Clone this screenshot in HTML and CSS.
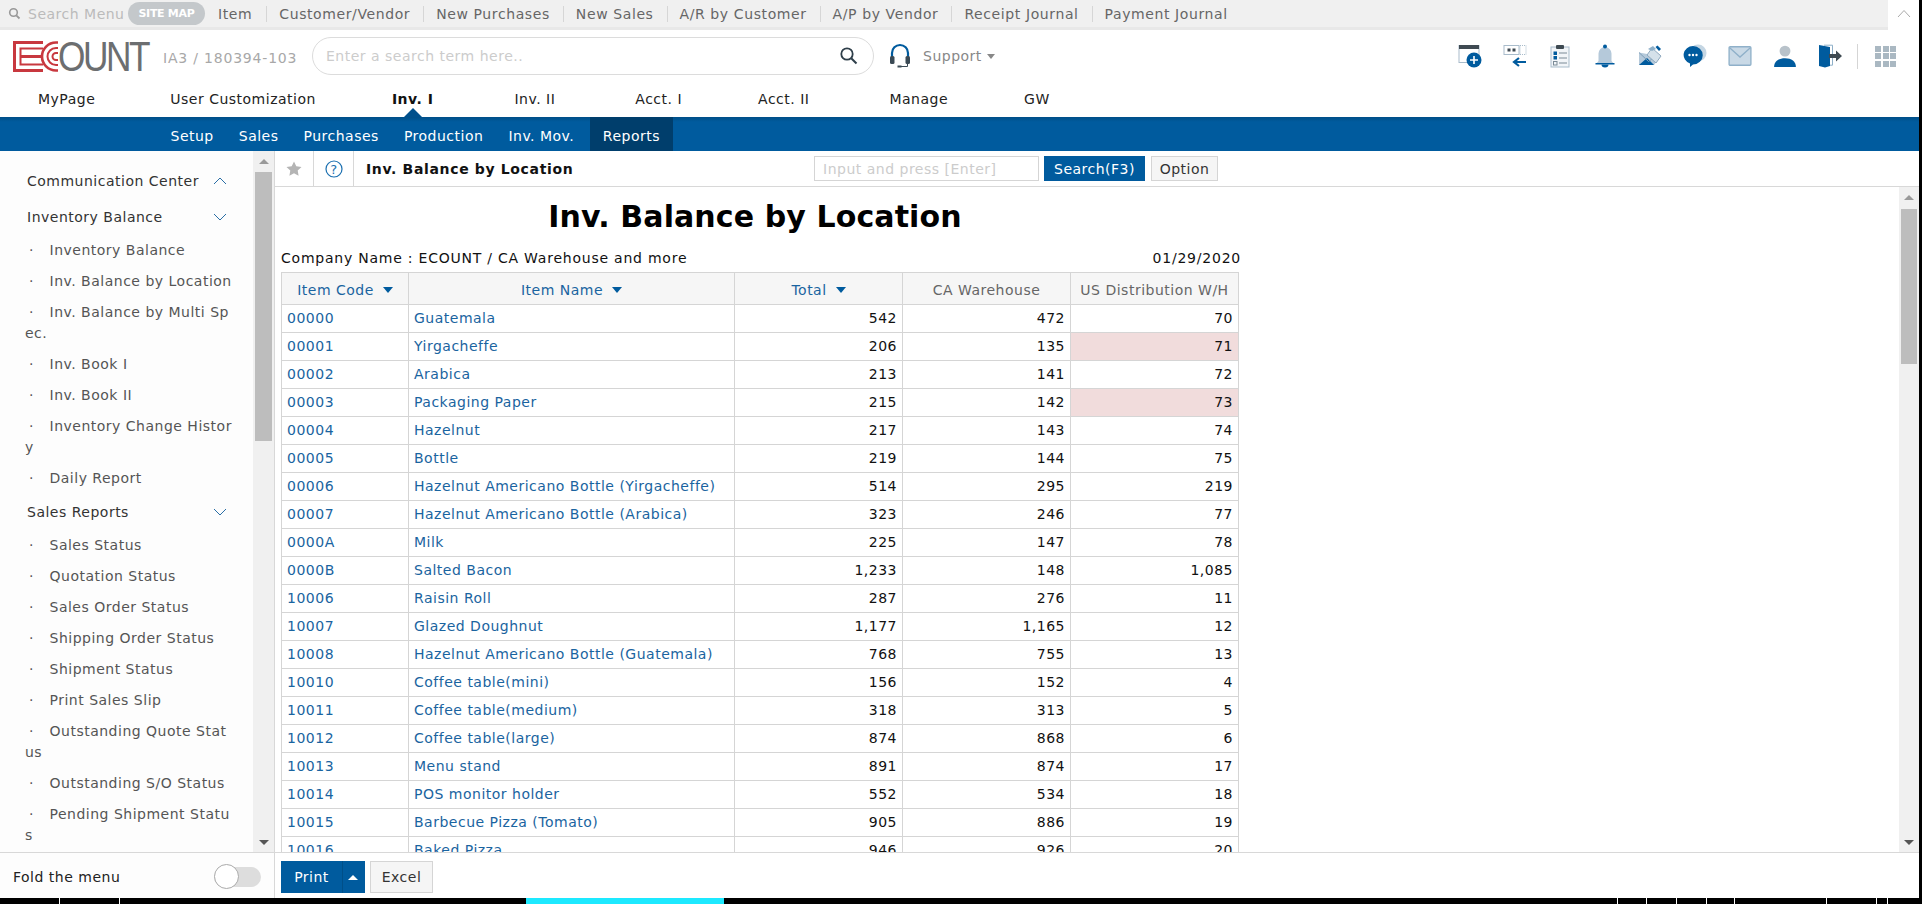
FILE: index.html
```html
<!DOCTYPE html>
<html lang="en">
<head>
<meta charset="utf-8">
<title>Inv. Balance by Location</title>
<link rel="stylesheet" href="styles.css">
</head>
<body>
<div class="frame">
<div class="page">
  <div class="quick">
    <div class="quick-bar">
      <svg class="q-search" width="13" height="13" viewBox="0 0 13 13"><circle cx="5.500" cy="5.500" r="3.800" fill="none" stroke="#999" stroke-width="1.600"/><path d="M8.300 8.300l3.200 3.200" stroke="#999" stroke-width="1.800"/></svg>
      <span class="q-label">Search Menu</span>
      <span class="sitemap">SITE MAP</span>
      <a class="q-link first">Item</a><a class="q-link">Customer/Vendor</a><a class="q-link">New Purchases</a><a class="q-link">New Sales</a><a class="q-link">A/R by Customer</a><a class="q-link">A/P by Vendor</a><a class="q-link">Receipt Journal</a><a class="q-link">Payment Journal</a>
    </div>
    <div class="q-fold"><svg width="14" height="9" viewBox="0 0 14 9"><path d="M1 8l6-6.500L13 8" fill="none" stroke="#aaa" stroke-width="1"/></svg></div>
  </div>

  <header class="head">
    <div class="logo" aria-label="ECOUNT">
      <svg width="45" height="31" viewBox="0 0 45 31" class="logo-e"><g fill="none" stroke="#c8383f"><path d="M30 1.500H1.500v28H30" stroke-width="3"/><path d="M30 7.500H7.500v16H30" stroke-width="2"/><path d="M7.500 15.500H28" stroke-width="3"/><path d="M45 1.500h-2a14 14 0 0 0 0 28h2" stroke-width="2.600"/><path d="M45 7h-2a8.500 8.500 0 0 0 0 17h2" stroke-width="2"/><path d="M45 12h-2a3.500 3.500 0 0 0 0 7h2" stroke-width="2"/></g></svg>
      <span class="logo-text">OUNT</span>
    </div>
    <span class="company">IA3 / 180394-103</span>
    <div class="search">
      <span class="search-ph">Enter a search term here..</span>
      <svg width="20" height="20" viewBox="0 0 20 20"><circle cx="8" cy="8" r="5.700" fill="none" stroke="#2f3f4a" stroke-width="1.800"/><path d="M12.200 12.200l5.300 5.300" stroke="#2f3f4a" stroke-width="2"/></svg>
    </div>
    <svg class="headset" width="22" height="26" viewBox="0 0 22 26"><path d="M3 14V10a8 8 0 0 1 16 0v4" fill="none" stroke="#005b9e" stroke-width="2.200"/><rect x="1" y="13" width="4.500" height="8" rx="1.500" fill="#3b4a55"/><rect x="16.500" y="13" width="4.500" height="8" rx="1.500" fill="#3b4a55"/><path d="M18.500 21v2.500H12" fill="none" stroke="#3b4a55" stroke-width="1"/><rect x="8.500" y="22.500" width="4" height="2" fill="#3b4a55"/></svg>
    <span class="support">Support</span><span class="support-caret"></span>
    <div class="tools">
      <svg viewBox="0 0 24 24"><rect x="1" y="1.500" width="20" height="17" fill="#fff" stroke="#a9bccb"/><rect x="1" y="1" width="20" height="4" fill="#3f4a52"/><circle cx="16" cy="16" r="7.500" fill="#005b9e"/><path d="M16 12v8M12 16h8" stroke="#fff" stroke-width="1.600"/></svg>
      <svg viewBox="0 0 24 24"><rect x="1" y="1.500" width="15" height="9" fill="#fff" stroke="#a9bccb"/><rect x="4.500" y="4.500" width="3" height="3" fill="#3f4a52"/><rect x="9.500" y="4.500" width="3" height="3" fill="#3f4a52"/><rect x="17" y="1.500" width="6" height="9" fill="none" stroke="#a9bccb" stroke-dasharray="1 1"/><path d="M23 18H12M16 14l-5 4 5 4" fill="none" stroke="#005b9e" stroke-width="2.200"/></svg>
      <svg viewBox="0 0 20 24"><rect x="1" y="3" width="18" height="20" fill="#f2f5f8" stroke="#a9bccb"/><rect x="6" y="1" width="8" height="4" rx="1" fill="#3f4a52"/><rect x="3.500" y="7.500" width="3.500" height="3.500" fill="#005b9e"/><rect x="3.500" y="12" width="3.500" height="3.500" fill="#005b9e"/><rect x="3.500" y="17.500" width="3.500" height="3.500" fill="none" stroke="#7a8a96"/><path d="M9 9h8M9 14h8M9 19h8" stroke="#7a8a96"/></svg>
      <svg viewBox="0 0 20 24"><path d="M3.500 17V9.500a6.500 6.500 0 0 1 13 0V17l2.500 3H1z" fill="#b5c9da"/><circle cx="10" cy="2.500" r="2" fill="#005b9e"/><path d="M0.500 19h19v1.500H.500z" fill="#005b9e"/><path d="M6.500 20.500h7a3.500 3 0 0 1-7 0" fill="#005b9e"/></svg>
      <svg viewBox="0 0 24 24"><path d="M1 8.500V21h15l4-6V12z" fill="#b5c9da"/><path d="M1 21l8-7 7 7z" fill="#005b9e"/><path d="M1 8.500l9.500 9L14 15" fill="none" stroke="#7f9fb8"/><path d="M14 4l9 8-5 7-9-8z" fill="#d5e1ea" stroke="#8fa9be"/><path d="M10 5l5-3 3 3-4 2z" fill="#8fb0c9"/><path d="M17.500 3l2-1.500 3.500 3.500-2 2z" fill="#005b9e"/></svg>
      <svg viewBox="0 0 24 24"><circle cx="15" cy="9" r="8.500" fill="#c5d6e3"/><path d="M10 2a9.500 9 0 0 1 0 18.500l-3 2.500v-3.500A9.500 9 0 0 1 10 2z" fill="#005b9e"/><circle cx="6.500" cy="11" r="1.200" fill="#fff"/><circle cx="10" cy="11" r="1.200" fill="#fff"/><circle cx="13.500" cy="11" r="1.200" fill="#fff"/></svg>
      <svg viewBox="0 0 22 20"><rect x="1" y="1.500" width="20" height="17" rx="1" fill="#c9d9e6" stroke="#8fb0c9" stroke-width="1.200"/><path d="M1.500 2.500L11 11l9.500-8.500" fill="none" stroke="#8fb0c9" stroke-width="1.200"/></svg>
      <svg viewBox="0 0 22 22"><circle cx="11" cy="6.500" r="5" fill="#b8c2ca"/><path d="M1 21c0-5 4-8 10-8s10 3 10 8z" fill="#005b9e"/></svg>
      <svg viewBox="0 0 24 24"><path d="M1 1l11 2v19l-5 1.500-6-1.500z" fill="#005b9e"/><path d="M6 1.200h8.500v20H12" fill="none" stroke="#8fb0c9"/><path d="M11 10h7V6.500l6 5.500-6 5.500V14h-7z" fill="#3f4a52"/></svg>
      <span class="tool-sep"></span>
      <div class="apps"><i></i><i></i><i></i><i></i><i></i><i></i><i></i><i></i><i></i></div>
    </div>
  </header>

  <nav class="main-nav">
    <a class="m1">MyPage</a><a class="m2">User Customization</a><a class="m3 active">Inv. I</a><a class="m4">Inv. II</a><a class="m5">Acct. I</a><a class="m6">Acct. II</a><a class="m7">Manage</a><a class="m8">GW</a>
  </nav>
  <nav class="sub-nav">
    <a>Setup</a><a>Sales</a><a>Purchases</a><a>Production</a><a>Inv. Mov.</a><a class="on">Reports</a>
  </nav>

  <div class="workspace">
    <aside class="side">
      <div class="side-scroll">
        <div class="side-list">
          <div class="grp">Communication Center<svg width="14" height="8" viewBox="0 0 14 8"><path d="M1 7l6-6 6 6" fill="none" stroke="#2a6ea5"/></svg></div>
          <div class="grp">Inventory Balance<svg width="14" height="8" viewBox="0 0 14 8"><path d="M1 1l6 6 6-6" fill="none" stroke="#2a6ea5"/></svg></div>
          <a class="lk">Inventory Balance</a>
          <a class="lk">Inv. Balance by Location</a>
          <a class="lk">Inv. Balance by Multi Sp<br>ec.</a>
          <a class="lk">Inv. Book I</a>
          <a class="lk">Inv. Book II</a>
          <a class="lk">Inventory Change Histor<br>y</a>
          <a class="lk">Daily Report</a>
          <div class="grp">Sales Reports<svg width="14" height="8" viewBox="0 0 14 8"><path d="M1 1l6 6 6-6" fill="none" stroke="#2a6ea5"/></svg></div>
          <a class="lk">Sales Status</a>
          <a class="lk">Quotation Status</a>
          <a class="lk">Sales Order Status</a>
          <a class="lk">Shipping Order Status</a>
          <a class="lk">Shipment Status</a>
          <a class="lk">Print Sales Slip</a>
          <a class="lk">Outstanding Quote Stat<br>us</a>
          <a class="lk">Outstanding S/O Status</a>
          <a class="lk">Pending Shipment Statu<br>s</a>
        </div>
        <div class="vbar side-bar"><span class="up"></span><span class="thumb"></span><span class="down"></span></div>
      </div>
      <div class="fold">
        <span>Fold the menu</span>
        <span class="toggle"><i></i></span>
      </div>
    </aside>

    <main class="content">
      <div class="toolbar">
        <span class="tb-btn star"><svg width="16" height="15" viewBox="0 0 18 17"><path d="M9 .5l2.600 5.400 5.900.8-4.300 4.100 1 5.900L9 13.900 3.800 16.700l1-5.900L.5 6.700l5.900-.8z" fill="#b4b4b4"/></svg></span>
        <span class="tb-btn help"><svg width="18" height="18" viewBox="0 0 18 18"><circle cx="9" cy="9" r="8" fill="none" stroke="#1a6fb0" stroke-width="1.200"/><text x="9" y="13.500" text-anchor="middle" class="q-mark">?</text></svg></span>
        <strong class="tb-title">Inv. Balance by Location</strong>
        <div class="tb-actions">
          <span class="tb-input">Input and press [Enter]</span>
          <span class="btn-search">Search(F3)</span>
          <span class="btn-option">Option</span>
        </div>
      </div>

      <div class="report-wrap">
        <div class="report">
          <h1>Inv. Balance by Location</h1>
          <div class="meta"><span>Company Name : ECOUNT / CA Warehouse and more</span><span>01/29/2020</span></div>
          <table>
            <colgroup><col class="c1"><col class="c2"><col class="c3"><col class="c4"><col class="c5"></colgroup>
            <thead>
              <tr><th class="blue">Item Code<i class="caret"></i></th><th class="blue">Item Name<i class="caret"></i></th><th class="blue">Total<i class="caret"></i></th><th>CA Warehouse</th><th>US Distribution W/H</th></tr>
            </thead>
            <tbody>
              <tr><td><a>00000</a></td><td><a>Guatemala</a></td><td class="n">542</td><td class="n">472</td><td class="n">70</td></tr>
              <tr><td><a>00001</a></td><td><a>Yirgacheffe</a></td><td class="n">206</td><td class="n">135</td><td class="n low">71</td></tr>
              <tr><td><a>00002</a></td><td><a>Arabica</a></td><td class="n">213</td><td class="n">141</td><td class="n">72</td></tr>
              <tr><td><a>00003</a></td><td><a>Packaging Paper</a></td><td class="n">215</td><td class="n">142</td><td class="n low">73</td></tr>
              <tr><td><a>00004</a></td><td><a>Hazelnut</a></td><td class="n">217</td><td class="n">143</td><td class="n">74</td></tr>
              <tr><td><a>00005</a></td><td><a>Bottle</a></td><td class="n">219</td><td class="n">144</td><td class="n">75</td></tr>
              <tr><td><a>00006</a></td><td><a>Hazelnut Americano Bottle (Yirgacheffe)</a></td><td class="n">514</td><td class="n">295</td><td class="n">219</td></tr>
              <tr><td><a>00007</a></td><td><a>Hazelnut Americano Bottle (Arabica)</a></td><td class="n">323</td><td class="n">246</td><td class="n">77</td></tr>
              <tr><td><a>0000A</a></td><td><a>Milk</a></td><td class="n">225</td><td class="n">147</td><td class="n">78</td></tr>
              <tr><td><a>0000B</a></td><td><a>Salted Bacon</a></td><td class="n">1,233</td><td class="n">148</td><td class="n">1,085</td></tr>
              <tr><td><a>10006</a></td><td><a>Raisin Roll</a></td><td class="n">287</td><td class="n">276</td><td class="n">11</td></tr>
              <tr><td><a>10007</a></td><td><a>Glazed Doughnut</a></td><td class="n">1,177</td><td class="n">1,165</td><td class="n">12</td></tr>
              <tr><td><a>10008</a></td><td><a>Hazelnut Americano Bottle (Guatemala)</a></td><td class="n">768</td><td class="n">755</td><td class="n">13</td></tr>
              <tr><td><a>10010</a></td><td><a>Coffee table(mini)</a></td><td class="n">156</td><td class="n">152</td><td class="n">4</td></tr>
              <tr><td><a>10011</a></td><td><a>Coffee table(medium)</a></td><td class="n">318</td><td class="n">313</td><td class="n">5</td></tr>
              <tr><td><a>10012</a></td><td><a>Coffee table(large)</a></td><td class="n">874</td><td class="n">868</td><td class="n">6</td></tr>
              <tr><td><a>10013</a></td><td><a>Menu stand</a></td><td class="n">891</td><td class="n">874</td><td class="n">17</td></tr>
              <tr><td><a>10014</a></td><td><a>POS monitor holder</a></td><td class="n">552</td><td class="n">534</td><td class="n">18</td></tr>
              <tr><td><a>10015</a></td><td><a>Barbecue Pizza (Tomato)</a></td><td class="n">905</td><td class="n">886</td><td class="n">19</td></tr>
              <tr><td><a>10016</a></td><td><a>Baked Pizza</a></td><td class="n">946</td><td class="n">926</td><td class="n">20</td></tr>
            </tbody>
          </table>
        </div>
        <div class="vbar main-bar"><span class="up"></span><span class="thumb"></span><span class="down"></span></div>
      </div>

      <div class="actions">
        <span class="btn-print"><span>Print</span><span class="print-more"></span></span>
        <span class="btn-excel">Excel</span>
      </div>
    </main>
  </div>
</div>
</div>
<div class="taskbar"><span class="s1"></span><span class="s2"></span><span class="s3"></span><span class="t-cyan"></span><span class="s4"></span><span class="s5"></span><span class="s6"></span><span class="s7"></span><span class="s8"></span><span class="s9"></span><span class="s10"></span><span class="s11"></span></div>
</body>
</html>
```

FILE: styles.css
```css
* { box-sizing: border-box; }
html, body { margin: 0; height: 100%; overflow: hidden; }
body { font-family: "DejaVu Sans", Verdana, sans-serif; font-size: 14px; letter-spacing: .5px; color: #222; background: #000; display: flex; flex-direction: column; }
a { text-decoration: none; color: inherit; }
.frame { flex: 1; min-height: 0; display: flex; }
.page { width: 1919px; background: #fff; display: flex; flex-direction: column; }

.quick { height: 30px; display: flex; flex: none; }
.quick-bar { width: 1888px; background: #f0f0f0; border-bottom: 3px solid #e8e8e8; display: flex; align-items: center; padding-left: 8px; color: #666; }
.q-search { margin-right: 7px; flex: none; }
.q-label { color: #bbb; width: 100px; white-space: nowrap; }
.sitemap { background: #c4c8cb; color: #fff; border-radius: 12px; font-weight: 700; font-size: 11px; width: 77px; height: 23px; line-height: 23px; text-align: center; white-space: nowrap; letter-spacing: -.3px; margin-right: 13px; }
.q-link { padding: 0 13px 0 12px; border-left: 1px solid #d6d6d6; line-height: 16px; white-space: nowrap; letter-spacing: .6px; }
.q-link.first { border-left: 0; padding: 0 14px 0 0; }
.q-fold { flex: 1; display: flex; justify-content: center; padding-top: 9px; }

.head { height: 55px; flex: none; display: flex; align-items: center; position: relative; padding: 0 0 3px 13px; }
.logo { display: flex; align-items: center; width: 150px; height: 31px; flex: none; }
.logo-e { flex: none; }
.logo-text { font-family: "Liberation Sans", sans-serif; color: #6c6e70; font-size: 43px; letter-spacing: -3px; line-height: 31px; width: 92px; transform: scaleX(.82); transform-origin: left; }
.company { color: #a8a8a8; width: 149px; flex: none; white-space: nowrap; letter-spacing: .8px; padding-top: 3px; }
.search { width: 562px; height: 38px; flex: none; border: 1px solid #dcdcdc; border-radius: 19px; display: flex; align-items: center; justify-content: space-between; padding: 0 14px 0 13px; color: #ccc; }
.headset { margin-left: 15px; flex: none; }
.support { color: #888; margin-left: 12px; }
.support-caret { border: 4px solid transparent; border-top: 5px solid #888; border-bottom: 0; margin-left: 5px; }
.tools { position: absolute; left: 1458px; top: 14px; display: flex; align-items: center; height: 24px; gap: 21px; }
.tools svg { width: 24px; height: 24px; flex: none; }
.tool-sep { width: 1px; height: 25px; background: #d5d5d5; margin-left: -6px; }
.apps { display: grid; grid-template-columns: repeat(3, 6px); gap: 1.500px; margin-left: -4px; }
.apps i { height: 6px; background: #aab8c2; }

.main-nav { height: 32px; flex: none; display: flex; }
.main-nav a { line-height: 20px; padding-top: 4px; white-space: nowrap; color: #222; }
.m1 { margin-left: 38px; } .m2 { margin-left: 75px; } .m3 { margin-left: 76px; } .m4 { margin-left: 81px; } .m5 { margin-left: 80px; } .m6 { margin-left: 76px; } .m7 { margin-left: 80px; } .m8 { margin-left: 76px; }
.main-nav .active { font-weight: 700; color: #111; position: relative; }
.active::after { content: ""; position: absolute; left: 50%; bottom: 0; margin-left: -9px; border: 9px solid transparent; border-top: 0; border-bottom: 9px solid #00508c; }

.sub-nav { height: 34px; flex: none; background: linear-gradient(#004f88, #005b9e 5px); display: flex; padding-left: 158px; color: #fff; }
.sub-nav a { padding: 0 12.500px; line-height: 38px; white-space: nowrap; }
.sub-nav a.on { background: #003e6c; margin-left: 3px; padding: 0 13px; }

.workspace { flex: 1; min-height: 0; display: flex; }
.side { width: 275px; flex: none; background: #fdfdfd; border-right: 1px solid #d8d8d8; display: flex; flex-direction: column; }
.side-scroll { flex: 1; min-height: 0; display: flex; overflow: hidden; }
.side-list { width: 253px; flex: none; padding: 12px 0 0 25px; color: #555; overflow: hidden; }
.grp { color: #333; display: flex; align-items: center; justify-content: space-between; height: 36px; margin-left: 2px; margin-right: 26px; white-space: nowrap; }
.grp svg { flex: none; }
.grp + .lk { margin-top: 3px; }
.lk + .grp { margin-top: -3px; }
.lk { display: block; line-height: 21px; padding-top: 2px; padding-bottom: 8px; white-space: nowrap; }
.lk::before { content: "·"; display: inline-block; width: 20.500px; padding-left: 4px; }
.vbar { position: relative; flex: none; background: #f0f0f0; }
.vbar .up, .vbar .down { position: absolute; left: 50%; margin-left: -5px; border: 5px solid transparent; }
.vbar .up { border-top: 0; border-bottom: 5px solid #999; top: 8px; }
.vbar .down { border-bottom: 0; border-top: 5px solid #555; bottom: 7px; }
.vbar .thumb { position: absolute; background: #bdbdbd; left: 2px; right: 2px; }
.side-bar { width: 21px; }
.side-bar .thumb { top: 21px; height: 269px; }
.fold { height: 46px; flex: none; border-top: 1px solid #d8d8d8; display: flex; align-items: center; justify-content: space-between; padding: 3px 13px 0 13px; color: #222; }
.toggle { width: 47px; height: 20px; border-radius: 10px; background: #ddd; position: relative; }
.toggle i { position: absolute; left: 0; top: -3px; width: 25px; height: 25px; border-radius: 50%; background: #fff; border: 1px solid #aaa; }

.content { flex: 1; min-width: 0; display: flex; flex-direction: column; }
.toolbar { height: 36px; flex: none; border-bottom: 1px solid #d8d8d8; display: flex; align-items: center; }
.tb-btn { height: 35px; flex: none; border-right: 1px solid #d8d8d8; display: flex; align-items: center; justify-content: center; }
.star { width: 39px; }
.help { width: 40px; }
.q-mark { font: 400 13px "DejaVu Sans", sans-serif; fill: #1a6fb0; }
.tb-title { margin-left: 12px; color: #111; width: 448px; flex: none; white-space: nowrap; letter-spacing: .65px; }
.tb-actions { display: flex; gap: 5px; align-items: center; }
.tb-input { width: 225px; height: 25px; border: 1px solid #d5d5d5; color: #ccc; padding-left: 8px; line-height: 25px; white-space: nowrap; }
.btn-search { background: #005b9e; color: #fff; width: 101px; height: 25px; line-height: 27px; text-align: center; white-space: nowrap; }
.btn-option { background: #f5f5f5; border: 1px solid #d5d5d5; width: 67px; height: 25px; line-height: 25px; text-align: center; color: #333; margin-left: 1px; }

.report-wrap { flex: 1; min-height: 0; display: flex; overflow: hidden; }
.report { flex: 1; min-width: 0; padding: 0 0 0 6px; overflow: hidden; }
.main-bar { width: 20px; }
.main-bar .thumb { top: 22px; height: 155px; }
h1 { width: 948px; text-align: center; margin: 0; font-size: 30px; font-weight: 700; line-height: 36px; padding-top: 12px; height: 62px; color: #000; letter-spacing: .1px; }
.meta { width: 960px; display: flex; justify-content: space-between; height: 18px; color: #111; line-height: 18px; letter-spacing: .77px; margin-bottom: 5px; }
table { border-collapse: collapse; table-layout: fixed; width: 957px; }
.c1 { width: 127px; } .c2 { width: 326px; } .c3 { width: 168px; } .c4 { width: 168px; } .c5 { width: 168px; }
th, td { border: 1px solid #d5d5d5; height: 28px; padding: 0 5px 2px; white-space: nowrap; font-weight: 400; }
thead tr { border-top: 1px solid #9fb4c4; }
th { height: 32px; padding: 2px 5px 0; background: #f6f6f6; color: #666; }
th.blue { color: #1a64a0; }
td a { color: #1a64a0; }
.n { text-align: right; color: #111; }
.low { background: #f1dcdc; }
.caret { display: inline-block; border: 5px solid transparent; border-top: 6px solid #005b9e; border-bottom: 0; margin-left: 9px; vertical-align: 2px; }

.actions { height: 46px; flex: none; border-top: 1px solid #d8d8d8; display: flex; align-items: center; gap: 5px; padding: 3px 0 0 6px; }
.btn-print { background: #005b9e; color: #fff; width: 84px; height: 32px; display: flex; align-items: center; }
.btn-print > span:first-child { width: 62px; text-align: center; border-right: 1px solid #004f88; line-height: 32px; }
.print-more { border: 5px solid transparent; border-top: 0; border-bottom: 5px solid #fff; margin-left: 5px; }
.btn-excel { background: #f5f5f5; border: 1px solid #d5d5d5; width: 63px; height: 32px; line-height: 30px; text-align: center; color: #333; }

.taskbar { height: 6px; flex: none; background: #000; display: flex; }
.taskbar span { border-right: 1px solid #fff; flex: none; }
.s1 { width: 60px; } .s2 { width: 60px; } .s3 { width: 406px; border-right: 0 !important; }
.taskbar .t-cyan { width: 198px; background: #1de9ff; border-right: 0; }
.s4 { width: 894px; } .s5 { width: 29px; } .s6 { width: 30px; } .s7 { width: 30px; } .s8 { width: 28px; } .s9 { width: 92px; } .s10 { width: 50px; } .s11 { width: 11px; }
```
